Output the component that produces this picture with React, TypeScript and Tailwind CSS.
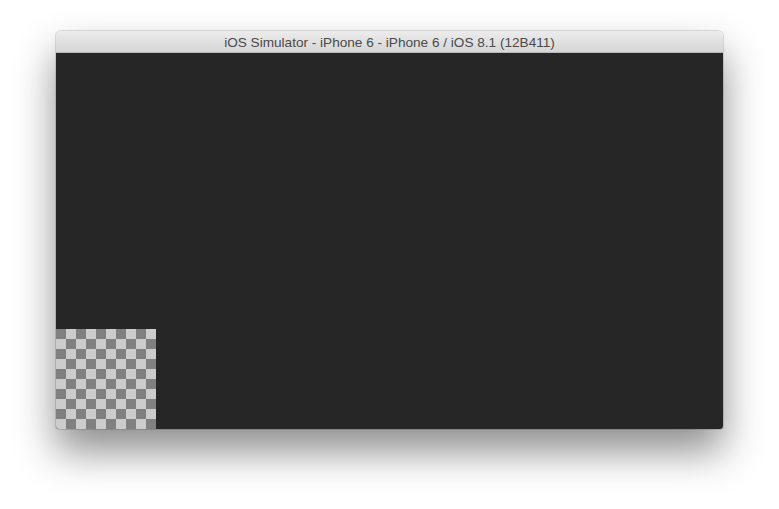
export default function App() {
  const cells = Array.from({ length: 100 }, (_, i) => {
    const r = Math.floor(i / 10);
    const c = i % 10;
    return (r + c) % 2 === 0;
  });

  return (
    <div className="w-[779px] h-[509px] bg-white flex justify-center pt-[31px] font-['Liberation_Sans',sans-serif]">
      <div className="w-[667px] h-[398px] flex flex-col rounded-t-[5px] rounded-b-[3px] overflow-hidden shadow-[0_22px_40px_rgba(0,0,0,0.45),0_0_0_1px_rgba(0,0,0,0.12)]">
        <div className="h-[22px] shrink-0 bg-gradient-to-b from-[#ececec] to-[#d6d6d6] border-b border-[#b8b8b8] flex items-center justify-center pt-[3px]">
          <span className="text-[13.6px] leading-none text-[#4a4a4a]">
            iOS Simulator - iPhone 6 - iPhone 6 / iOS 8.1 (12B411)
          </span>
        </div>
        <div className="flex-1 bg-[#262626] flex flex-col justify-end">
          <div className="grid grid-cols-10 w-[100px] h-[100px]">
            {cells.map((dark, i) => (
              <div key={i} className={dark ? "bg-[#808080]" : "bg-[#cccccc]"} />
            ))}
          </div>
        </div>
      </div>
    </div>
  );
}
